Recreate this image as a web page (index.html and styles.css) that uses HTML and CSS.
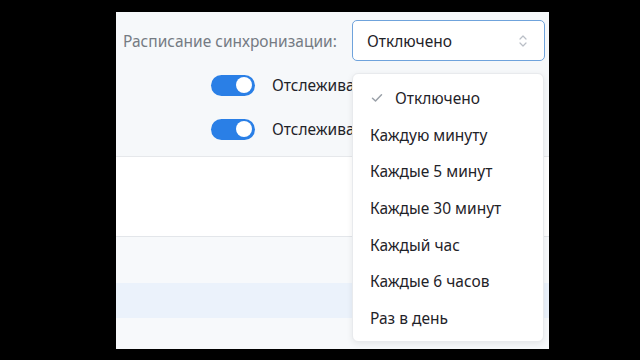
FILE: index.html
```html
<!DOCTYPE html>
<html lang="ru">
<head>
<meta charset="utf-8">
<link rel="stylesheet" href="styles.css">
</head>
<body>
<div class="frame">
  <section class="settings">
    <div class="row-schedule">
      <span class="label">Расписание синхронизации:</span>
      <div class="select">
        <span>Отключено</span>
        <svg class="chev" width="8" height="14" viewBox="0 0 8 14"><path d="M1 5 L4 2 L7 5 M1 9 L4 12 L7 9" fill="none" stroke="#b9bec6" stroke-width="1.2" stroke-linecap="round" stroke-linejoin="round"/></svg>
      </div>
    </div>
    <div class="toggles">
      <div class="toggle-row"><span class="toggle"><span class="knob"></span></span><span class="ttext">Отслежива</span></div>
      <div class="toggle-row"><span class="toggle"><span class="knob"></span></span><span class="ttext">Отслежива</span></div>
    </div>
  </section>
  <section class="blank"></section>
  <section class="band grey1"></section>
  <section class="band blue"></section>
  <section class="band grey2"></section>
  <ul class="menu">
    <li class="selected"><svg class="check" width="12" height="10" viewBox="0 0 12 10"><path d="M1.5 5.2 L4.5 8 L10.5 1.8" fill="none" stroke="#9aa0a8" stroke-width="1.5" stroke-linecap="round" stroke-linejoin="round"/></svg>Отключено</li>
    <li>Каждую минуту</li>
    <li>Каждые 5 минут</li>
    <li>Каждые 30 минут</li>
    <li>Каждый час</li>
    <li>Каждые 6 часов</li>
    <li>Раз в день</li>
  </ul>
</div>
</body>
</html>
```
FILE: styles.css
```css
html, body { margin: 0; padding: 0; }
body {
  background: #000;
  width: 640px;
  height: 360px;
  overflow: hidden;
  font-family: "Noto Sans", "Open Sans", sans-serif;
  color: #1f2329;
}
.frame {
  position: relative;
  margin: 12px 0 0 116px;
  width: 433px;
  height: 337px;
  overflow: hidden;
  display: flex;
  flex-direction: column;
}
.settings {
  height: 144px;
  background: #f6f8fa;
  border-bottom: 1px solid #e6e8eb;
  flex: none;
}
.row-schedule {
  display: flex;
  align-items: center;
  height: 41px;
  margin-top: 8px;
}
.label {
  color: #757b83;
  font-size: 15.5px;
  margin-left: 7px;
  width: 229px;
  white-space: nowrap;
}
.select {
  box-sizing: border-box;
  width: 193px;
  height: 41px;
  border: 1.5px solid #6fa3dc;
  border-radius: 5px;
  background: #fff;
  display: flex;
  align-items: center;
  justify-content: space-between;
  padding: 0 17px 0 14px;
  font-size: 15.5px;
}
.chev { display: block; }
.toggles {
  display: flex;
  flex-direction: column;
  gap: 24px;
  margin-top: 14px;
  padding-left: 95px;
}
.toggle-row {
  display: flex;
  align-items: center;
  height: 20px;
}
.toggle {
  box-sizing: border-box;
  width: 44px;
  height: 21px;
  border-radius: 11px;
  background: #2a7fe6;
  display: flex;
  align-items: center;
  justify-content: flex-end;
  padding-right: 3px;
  flex: none;
}
.knob {
  width: 16px;
  height: 16px;
  border-radius: 50%;
  background: #fff;
}
.ttext {
  margin-left: 17px;
  font-size: 15.5px;
  white-space: nowrap;
}
.blank {
  height: 79px;
  background: #fff;
  border-bottom: 1px solid #e3e6ea;
  flex: none;
}
.band { flex: none; }
.grey1 { height: 46px; background: #f7f9fb; }
.blue { height: 35px; background: #ebf2fb; }
.grey2 { flex: 1; background: #f7f9fb; }
.menu {
  position: absolute;
  left: 236px;
  top: 61px;
  width: 192px;
  height: 269px;
  box-sizing: border-box;
  margin: 0;
  padding: 6px 0;
  list-style: none;
  background: #fff;
  border: 1px solid #e8eaed;
  border-radius: 6px;
  box-shadow: 0 2px 6px rgba(0,0,0,0.08);
}
.menu li {
  height: 36.6px;
  display: flex;
  align-items: center;
  padding-left: 17px;
  font-size: 15.5px;
  white-space: nowrap;
}
.menu li.selected { padding-left: 18px; }
.check { margin-right: 12px; }
```
